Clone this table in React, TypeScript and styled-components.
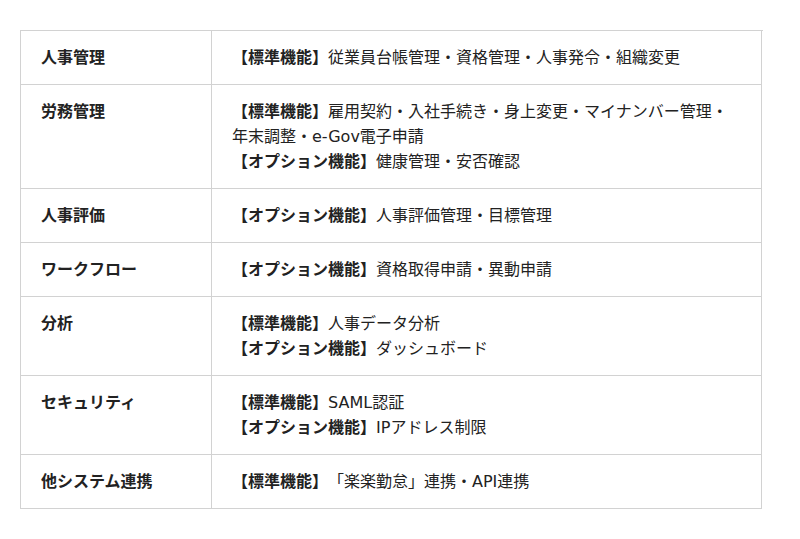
import React from "react";
import styled, { createGlobalStyle } from "styled-components";

const GlobalStyle = createGlobalStyle`
  html, body {
    margin: 0;
    padding: 0;
    background: #ffffff;
  }
  body {
    font-family: "DejaVu Sans", "Noto Sans CJK JP", sans-serif;
    color: #222222;
    text-spacing-trim: space-all;
  }
`;

const Page = styled.div`
  padding: 30px 0 0 20px;
`;

const Table = styled.div`
  display: grid;
  grid-template-columns: 191px 550px;
  width: 742px;
  border-top: 1px solid #d2d2d2;
  border-left: 1px solid #d2d2d2;
`;

const Cell = styled.div<{ $head?: boolean }>`
  box-sizing: border-box;
  padding: 14px 20px;
  border-right: 1px solid #d2d2d2;
  border-bottom: 1px solid #d2d2d2;
  font-size: 16px;
  line-height: 25px;
  font-weight: ${(p) => (p.$head ? 700 : 400)};
  color: #222222;
  text-spacing-trim: space-all;
`;

const Label = styled.span`
  font-weight: 700;
`;

const Line = styled.div``;

type Item = { kind: "std" | "opt"; text: string };

const rows: { title: string; items: Item[] }[] = [
  { title: "人事管理", items: [{ kind: "std", text: "従業員台帳管理・資格管理・人事発令・組織変更" }] },
  {
    title: "労務管理",
    items: [
      { kind: "std", text: "雇用契約・入社手続き・身上変更・マイナンバー管理・年末調整・e-Gov電子申請" },
      { kind: "opt", text: "健康管理・安否確認" },
    ],
  },
  { title: "人事評価", items: [{ kind: "opt", text: "人事評価管理・目標管理" }] },
  { title: "ワークフロー", items: [{ kind: "opt", text: "資格取得申請・異動申請" }] },
  {
    title: "分析",
    items: [
      { kind: "std", text: "人事データ分析" },
      { kind: "opt", text: "ダッシュボード" },
    ],
  },
  {
    title: "セキュリティ",
    items: [
      { kind: "std", text: "SAML認証" },
      { kind: "opt", text: "IPアドレス制限" },
    ],
  },
  { title: "他システム連携", items: [{ kind: "std", text: "「楽楽勤怠」連携・API連携" }] },
];

export default function App() {
  return (
    <>
      <GlobalStyle />
      <Page>
        <Table>
          {rows.map((r) => (
            <React.Fragment key={r.title}>
              <Cell $head>{r.title}</Cell>
              <Cell>
                {r.items.map((it, i) => (
                  <Line key={i}>
                    <Label>{it.kind === "std" ? "【標準機能】" : "【オプション機能】"}</Label>
                    {it.text}
                  </Line>
                ))}
              </Cell>
            </React.Fragment>
          ))}
        </Table>
      </Page>
    </>
  );
}
